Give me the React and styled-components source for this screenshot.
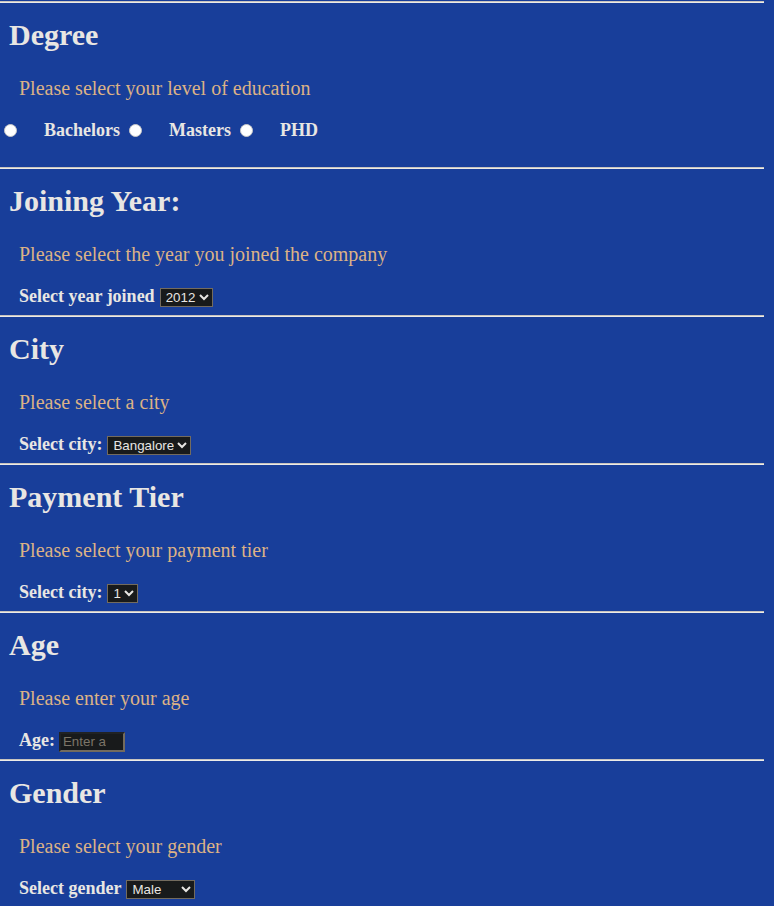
import React from "react";
import styled, { createGlobalStyle } from "styled-components";

const GlobalStyle = createGlobalStyle`
    html, body {
        margin: 0;
        padding: 0;
        background-color: #183e9a;
        overflow: hidden;
    }
`;

const Page = styled.div`
    width: 764px;
    padding-top: 1px;
    font-family: "Liberation Serif", "Times New Roman", serif;
`;

const Divider = styled.hr`
    margin: 0;
    height: 0;
    border: none;
    border-top: 1px solid #c8c4be;
    border-bottom: 1px solid #ecebe8;
`;

const Section = styled.section`
    display: flex;
    flex-direction: column;
`;

const Heading = styled.h1`
    margin: 15px 0 0;
    padding-left: 9px;
    font-size: 30px;
    line-height: 34px;
    font-weight: bold;
    color: #e8e6e3;
`;

const Hint = styled.p`
    margin: 24px 0 0 19px;
    font-size: 20px;
    line-height: 24px;
    color: #dcb286;
`;

const Row = styled.div`
    display: flex;
    align-items: baseline;
    height: 20px;
    margin-top: 20px;
    margin-bottom: ${({ $bottom }) => $bottom}px;
    padding-left: ${({ $indent }) => $indent}px;
`;

const Label = styled.label`
    font-size: 18px;
    line-height: 20px;
    font-weight: bold;
    color: #e8e6e3;
    margin-left: ${({ $left }) => $left || 0}px;
    margin-right: ${({ $right }) => $right || 0}px;
`;

const Radio = styled.input.attrs({ type: "radio" })`
    appearance: none;
    width: 13px;
    height: 13px;
    margin: 0;
    border-radius: 50%;
    background: #ffffff;
    border: 1px solid #c9c9c9;
    box-sizing: border-box;
    position: relative;
    top: 1px;
`;

const Select = styled.select`
    margin-left: 5px;
    width: ${({ $w }) => $w}px;
    height: 19px;
    padding: 0 0 0 1px;
    font-family: Arial, "Liberation Sans", sans-serif;
    font-size: 13.33px;
    color: #e8e6e3;
    background-color: #181a1b;
    border: 1px solid #736b5e;
    border-radius: 0;
    color-scheme: dark;
`;

const AgeInput = styled.input`
    margin-left: 4px;
    width: 66px;
    height: 20px;
    box-sizing: border-box;
    padding: 1px 2px;
    font-family: Arial, "Liberation Sans", sans-serif;
    font-size: 13.33px;
    color: #e8e6e3;
    background-color: #181a1b;
    border: 2px solid;
    border-color: #202224 #736b5e #736b5e #202224;

    &::placeholder {
        color: #7c7568;
    }
`;

const degrees = ["Bachelors", "Masters", "PHD"];

function Field({ title, hint, children, bottom = 9, indent = 19 }) {
    return (
        <Section>
            <Divider />
            <Heading>{title}</Heading>
            <Hint>{hint}</Hint>
            <Row $bottom={bottom} $indent={indent}>{children}</Row>
        </Section>
    );
}

export default function App() {
    return (
        <Page>
            <GlobalStyle />
            <Field title="Degree" hint="Please select your level of education" bottom={27} indent={4}>
                {degrees.map((d, i) => (
                    <React.Fragment key={d}>
                        <Radio name="degree" id={d} />
                        <Label htmlFor={d} $left={27} $right={i < degrees.length - 1 ? 9 : 0}>{d}</Label>
                    </React.Fragment>
                ))}
            </Field>
            <Field title="Joining Year:" hint="Please select the year you joined the company">
                <Label>Select year joined</Label>
                <Select $w={53} defaultValue="2012">
                    {[2012, 2013, 2014, 2015, 2016, 2017, 2018].map(y => <option key={y}>{y}</option>)}
                </Select>
            </Field>
            <Field title="City" hint="Please select a city">
                <Label>Select city:</Label>
                <Select $w={84}>
                    <option>Bangalore</option>
                    <option>Pune</option>
                    <option>New Delhi</option>
                </Select>
            </Field>
            <Field title="Payment Tier" hint="Please select your payment tier">
                <Label>Select city:</Label>
                <Select $w={31}>
                    <option>1</option>
                    <option>2</option>
                    <option>3</option>
                </Select>
            </Field>
            <Field title="Age" hint="Please enter your age">
                <Label>Age:</Label>
                <AgeInput type="number" placeholder="Enter age" />
            </Field>
            <Field title="Gender" hint="Please select your gender">
                <Label>Select gender</Label>
                <Select $w={69}>
                    <option>Male</option>
                    <option>Female</option>
                </Select>
            </Field>
        </Page>
    );
}
